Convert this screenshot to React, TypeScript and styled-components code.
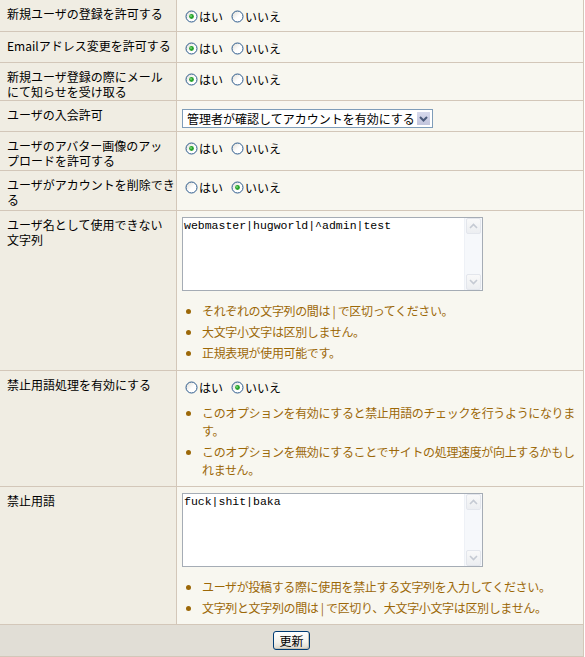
import React, { useId } from 'react';
import styled, { createGlobalStyle } from 'styled-components';

const colors = {
  line: '#d3c7b9',
  label: '#f0ede3',
  field: '#f8f7f0',
  footer: '#e1ded6',
  note: '#9c6808',
  xpBlue: '#7f9db9',
};

// row heights of the settings table, footer last
const rowHeights = [31, 30, 37, 30, 38, 39, 159, 115, 137, 31];

const GlobalStyle = createGlobalStyle`
  body {
    margin: 0;
    background: #ffffff;
    font-family: "Noto Sans CJK JP", "Liberation Sans", sans-serif;
    font-size: 12px;
    color: #000000;
  }
`;

const Radio = ({ checked }: { checked: boolean }) => {
  const id = useId();
  return (
    <RadioMark width="13" height="13" viewBox="0 0 13 13">
      <defs>
        <linearGradient id={`${id}g`} x1="0" y1="0" x2="1" y2="1">
          <stop offset="0" stopColor="#dcdad2" />
          <stop offset="0.55" stopColor="#ffffff" />
          <stop offset="1" stopColor="#ffffff" />
        </linearGradient>
      </defs>
      <circle cx="6.5" cy="6.5" r="5.5" fill={`url(#${id}g)`} stroke="#2c5a8c" strokeWidth="1" />
      {checked && (
        <>
          <circle cx="6.5" cy="6.5" r="2.4" fill="#27a22c" />
          <circle cx="6" cy="6" r="0.9" fill="#7fdc7a" />
        </>
      )}
    </RadioMark>
  );
};

const YesNo = ({ yes }: { yes: boolean }) => (
  <RadioGroup>
    <Choice>
      <Radio checked={yes} />
      はい
    </Choice>
    <Choice>
      <Radio checked={!yes} />
      いいえ
    </Choice>
  </RadioGroup>
);

const TextBox = ({ value }: { value: string }) => (
  <TextFrame>
    <TextValue>{value}</TextValue>
    <ScrollTrack>
      <ScrollButton>
        <svg width="9" height="6" viewBox="0 0 9 6">
          <path d="M1 5 L4.5 1.5 L8 5" fill="none" stroke="#c5cad3" strokeWidth="1.6" />
        </svg>
      </ScrollButton>
      <ScrollButton>
        <svg width="9" height="6" viewBox="0 0 9 6">
          <path d="M1 1 L4.5 4.5 L8 1" fill="none" stroke="#c5cad3" strokeWidth="1.6" />
        </svg>
      </ScrollButton>
    </ScrollTrack>
  </TextFrame>
);

const Notes = ({ items, $top }: { items: React.ReactNode[]; $top: number }) => (
  <NoteList $top={$top}>
    {items.map((item, i) => (
      <NoteItem key={i}>
        <BulletBox>
          <Bullet />
        </BulletBox>
        <NoteText>{item}</NoteText>
      </NoteItem>
    ))}
  </NoteList>
);

const Row = ({ label, children }: { label: string[]; children: React.ReactNode }) => (
  <>
    <LabelCell>
      {label.map((line, i) => (
        <LabelLine key={i}>{line}</LabelLine>
      ))}
    </LabelCell>
    <FieldCell>{children}</FieldCell>
  </>
);

export default function App() {
  return (
    <>
      <GlobalStyle />
      <SettingsGrid>
        <Row label={['新規ユーザの登録を許可する']}>
          <YesNo yes />
        </Row>
        <Row label={['Emailアドレス変更を許可する']}>
          <YesNo yes />
        </Row>
        <Row label={['新規ユーザ登録の際にメール', 'にて知らせを受け取る']}>
          <YesNo yes />
        </Row>
        <Row label={['ユーザの入会許可']}>
          <SelectBox>
            <SelectValue>管理者が確認してアカウントを有効にする</SelectValue>
            <SelectButton>
              <svg width="9" height="6" viewBox="0 0 9 6">
                <path d="M1 1 L4.5 4.5 L8 1" fill="none" stroke="#4b5a7a" strokeWidth="2" />
              </svg>
            </SelectButton>
          </SelectBox>
        </Row>
        <Row label={['ユーザのアバター画像のアッ', 'プロードを許可する']}>
          <YesNo yes />
        </Row>
        <Row label={['ユーザがアカウントを削除でき', 'る']}>
          <YesNo yes={false} />
        </Row>
        <Row label={['ユーザ名として使用できない', '文字列']}>
          <TextBox value="webmaster|hugworld|^admin|test" />
          <Notes
            $top={11}
            items={[
              'それぞれの文字列の間は | で区切ってください。',
              '大文字小文字は区別しません。',
              '正規表現が使用可能です。',
            ]}
          />
        </Row>
        <Row label={['禁止用語処理を有効にする']}>
          <YesNo yes={false} />
          <Notes
            $top={7}
            items={[
              <>
                このオプションを有効にすると禁止用語のチェックを行うようになりま
                <br />
                す。
              </>,
              <>
                このオプションを無効にすることでサイトの処理速度が向上するかもし
                <br />
                れません。
              </>,
            ]}
          />
        </Row>
        <Row label={['禁止用語']}>
          <TextBox value="fuck|shit|baka" />
          <Notes
            $top={11}
            items={[
              'ユーザが投稿する際に使用を禁止する文字列を入力してください。',
              '文字列と文字列の間は | で区切り、大文字小文字は区別しません。',
            ]}
          />
        </Row>
        <Footer>
          <SubmitButton type="button">更新</SubmitButton>
        </Footer>
      </SettingsGrid>
    </>
  );
}

const SettingsGrid = styled.div`
  display: grid;
  grid-template-columns: 176px 406px;
  grid-template-rows: ${rowHeights.map((h) => `${h}px`).join(' ')};
  gap: 1px;
  width: fit-content;
  background-color: ${colors.line};
  border-right: 1px solid ${colors.line};
  border-bottom: 1px solid ${colors.line};
`;

const LabelCell = styled.div`
  background-color: ${colors.label};
  padding: 6px 2px 0 7px;
  line-height: 15px;
  overflow: hidden;
`;

const LabelLine = styled.div`
  white-space: nowrap;
`;

const FieldCell = styled.div`
  background-color: ${colors.field};
  padding: 6px 5px 0 5px;
  line-height: 15px;
  overflow: hidden;
`;

const RadioGroup = styled.div`
  display: flex;
  align-items: center;
  height: 20px;
`;

const Choice = styled.label`
  display: flex;
  align-items: center;
  margin-right: 5px;
`;

const RadioMark = styled.svg`
  display: block;
  margin: 0 1px 0 3px;
`;

const SelectBox = styled.div`
  display: flex;
  align-items: stretch;
  width: 251px;
  height: 19px;
  margin-top: 2px;
  box-sizing: border-box;
  border: 1px solid ${colors.xpBlue};
  background-color: #ffffff;
`;

const SelectValue = styled.div`
  flex: 1;
  padding-left: 4px;
  line-height: 17px;
  white-space: nowrap;
  overflow: hidden;
`;

const SelectButton = styled.div`
  display: flex;
  align-items: center;
  justify-content: center;
  width: 15px;
  margin: 1px;
  box-sizing: border-box;
  border: 1px solid #ffffff;
  border-radius: 1px;
  background: linear-gradient(#d7d9ec, #c2c5dc);
`;

const TextFrame = styled.div`
  display: flex;
  width: 301px;
  height: 74px;
  box-sizing: border-box;
  border: 1px solid #a5acb5;
  background-color: #ffffff;
`;

const TextValue = styled.div`
  flex: 1;
  padding: 1px 1px;
  font-family: "Liberation Mono", "DejaVu Sans Mono", monospace;
  font-size: 11.5px;
  line-height: 14px;
  white-space: pre;
`;

const ScrollTrack = styled.div`
  display: flex;
  flex-direction: column;
  justify-content: space-between;
  width: 17px;
  background-color: #f6f8fb;
  border-left: 1px solid #eef1f6;
`;

const ScrollButton = styled.div`
  display: flex;
  align-items: center;
  justify-content: center;
  height: 16px;
  margin: 0 1px;
  box-sizing: border-box;
  border: 1px solid #e3e6ec;
  border-radius: 2px;
  background: linear-gradient(#f9f9f9, #eceef1);
`;

const NoteList = styled.ul<{ $top: number }>`
  list-style: none;
  margin: ${(p) => p.$top}px 0 0 0;
  padding: 0;
  display: flex;
  flex-direction: column;
  gap: 3px;
`;

const NoteItem = styled.li`
  display: flex;
  color: ${colors.note};
  line-height: 18px;
`;

const BulletBox = styled.div`
  flex: none;
  width: 20px;
`;

const Bullet = styled.div`
  width: 5px;
  height: 5px;
  margin: 7px 0 0 4px;
  border-radius: 50%;
  background-color: ${colors.note};
`;

const NoteText = styled.div`
  white-space: nowrap;
  letter-spacing: -0.35px;
`;

const Footer = styled.div`
  grid-column: 1 / -1;
  display: flex;
  justify-content: center;
  align-items: flex-start;
  padding-top: 6px;
  background-color: ${colors.footer};
`;

const SubmitButton = styled.button`
  width: 37px;
  height: 19px;
  padding: 0;
  font-family: inherit;
  font-size: 12px;
  line-height: 15px;
  color: #000000;
  border: 1px solid #003c74;
  border-radius: 3px;
  background: linear-gradient(#ffffff 0%, #f3f2ec 60%, #dcd8cc 100%);
  box-shadow: inset -1px -1px 0 #c9c3b4;
`;
